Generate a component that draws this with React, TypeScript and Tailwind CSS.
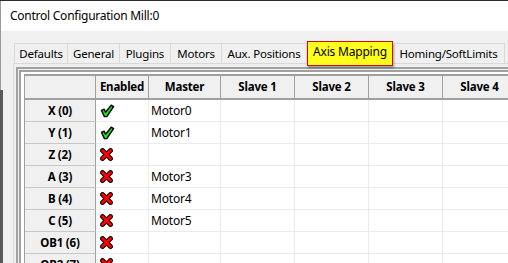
import React from "react";

const font = { fontFamily: '"Noto Sans", "Open Sans", sans-serif' };

function Check() {
  return (
    <svg width="15" height="14" viewBox="0 0 15 14">
      <path
        d="M1.5 6.5 L4.2 5.2 L5.6 8.2 L11.2 1.2 L13.6 2.6 L6.8 12.6 L4.4 12.6 Z"
        fill="#1ee01e"
        stroke="#000"
        strokeWidth="1.4"
        strokeLinejoin="round"
      />
    </svg>
  );
}

function Cross() {
  return (
    <svg width="13" height="13" viewBox="0 0 13 13">
      <path d="M2.5 2.5 L10.5 10.5 M10.5 2.5 L2.5 10.5" stroke="#000" strokeWidth="4.8" strokeLinecap="round" />
      <path d="M2.5 2.5 L10.5 10.5 M10.5 2.5 L2.5 10.5" stroke="#ff0000" strokeWidth="2.8" strokeLinecap="round" />
    </svg>
  );
}

const cols = ["w-[53px]", "w-[72px]", "w-[74px]", "w-[74px]", "w-[74px]", "w-[74px]"];
const heads = ["Enabled", "Master", "Slave 1", "Slave 2", "Slave 3", "Slave 4"];

const rows: { name: string; on: boolean; master: string }[] = [
  { name: "X (0)", on: true, master: "Motor0" },
  { name: "Y (1)", on: true, master: "Motor1" },
  { name: "Z (2)", on: false, master: "" },
  { name: "A (3)", on: false, master: "Motor3" },
  { name: "B (4)", on: false, master: "Motor4" },
  { name: "C (5)", on: false, master: "Motor5" },
  { name: "OB1 (6)", on: false, master: "" },
  { name: "OB2 (7)", on: false, master: "" },
];

const tabs = [
  { label: "Defaults", w: "w-[54px]" },
  { label: "General", w: "w-[52px]" },
  { label: "Plugins", w: "w-[51px]" },
  { label: "Motors", w: "w-[51px]" },
  { label: "Aux. Positions", w: "w-[85px]" },
];

export default function App() {
  return (
    <div className="w-[508px] h-[263px] overflow-hidden bg-[#f0f0f0] text-black relative" style={font}>
      <div className="h-px bg-[#2b2b2b]" />
      <div className="flex h-[262px]">
        <div className="w-px bg-[#9a9a9a]" />
        <div className="flex-1 flex flex-col min-w-0">
          <div className="h-[30px] shrink-0 bg-white pl-[9px] flex items-center text-[12px] tracking-[-0.25px] text-[#000]">
            Control Configuration Mill:0
          </div>
          <div className="flex-1 pl-[12px] pt-[10px] min-w-0">
            <div className="flex items-end h-[22px] ml-px relative z-10 text-[11.5px] tracking-[-0.2px]">
              {tabs.map((t, i) => (
                <div
                  key={t.label}
                  className={`${t.w} h-[20px] shrink-0 flex items-center justify-center border-t border-r border-[#d9d9d9] ${i === 0 ? "border-l" : ""}`}
                >
                  {t.label}
                </div>
              ))}
              <div className="w-[86px] h-[25px] -mb-[3px] shrink-0 flex items-center justify-center bg-[#ffff1e] border border-[#d01010] shadow-[1px_2px_2px_rgba(0,0,0,0.35)] pb-[3px] text-[12px]">
                Axis Mapping
              </div>
              <div className="w-[112px] h-[20px] shrink-0 flex items-center justify-center border-t border-r border-[#d9d9d9]">
                Homing/SoftLimits
              </div>
            </div>
            <div className="border-t border-l border-[#d9d9d9] pl-[2px] pt-[3px] h-full">
              <div className="border-t-2 border-l-2 border-[#a0a0a0] pl-px pt-px bg-[#f0f0f0] h-full">
                <div className="border-t-2 border-l-2 border-[#a0a0a0] pl-[3px] pt-[2px] bg-white h-full">
                  <div className="border-l border-t-2 border-[#a0a0a0] flex flex-col">
                    <div className="flex h-[24px]">
                      <div className="w-[71px] shrink-0 bg-[#f0f0f0] border-r border-b-2 border-[#a0a0a0]" />
                      {heads.map((h, i) => (
                        <div
                          key={h}
                          className={`${cols[i]} shrink-0 bg-[#f0f0f0] border-r border-b-2 border-[#a0a0a0] flex items-center justify-center text-[11.5px] tracking-[-0.2px] font-bold`}
                        >
                          {h}
                        </div>
                      ))}
                    </div>
                    {rows.map((r) => (
                      <div key={r.name} className="flex h-[22px]">
                        <div className="w-[71px] shrink-0 bg-[#f0f0f0] border-r border-r-[#a0a0a0] border-b border-b-[#c8c8c8] flex items-center justify-center text-[11.5px] tracking-[-0.2px] font-bold">
                          {r.name}
                        </div>
                        <div className={`${cols[0]} shrink-0 border-r border-b border-[#ebebeb] flex items-center pl-[4px]`}>
                          {r.on ? <Check /> : <Cross />}
                        </div>
                        <div className={`${cols[1]} shrink-0 border-r border-b border-[#ebebeb] flex items-center pl-[2px] text-[12px] tracking-[-0.2px]`}>
                          {r.master}
                        </div>
                        {cols.slice(2).map((c, j) => (
                          <div key={j} className={`${c} shrink-0 border-r border-b border-[#ebebeb]`} />
                        ))}
                      </div>
                    ))}
                  </div>
                </div>
              </div>
            </div>
          </div>
        </div>
      </div>
      <div className="absolute left-0 top-[90px] bottom-0 w-[3px] bg-[#5a5a5a]" />
    </div>
  );
}
